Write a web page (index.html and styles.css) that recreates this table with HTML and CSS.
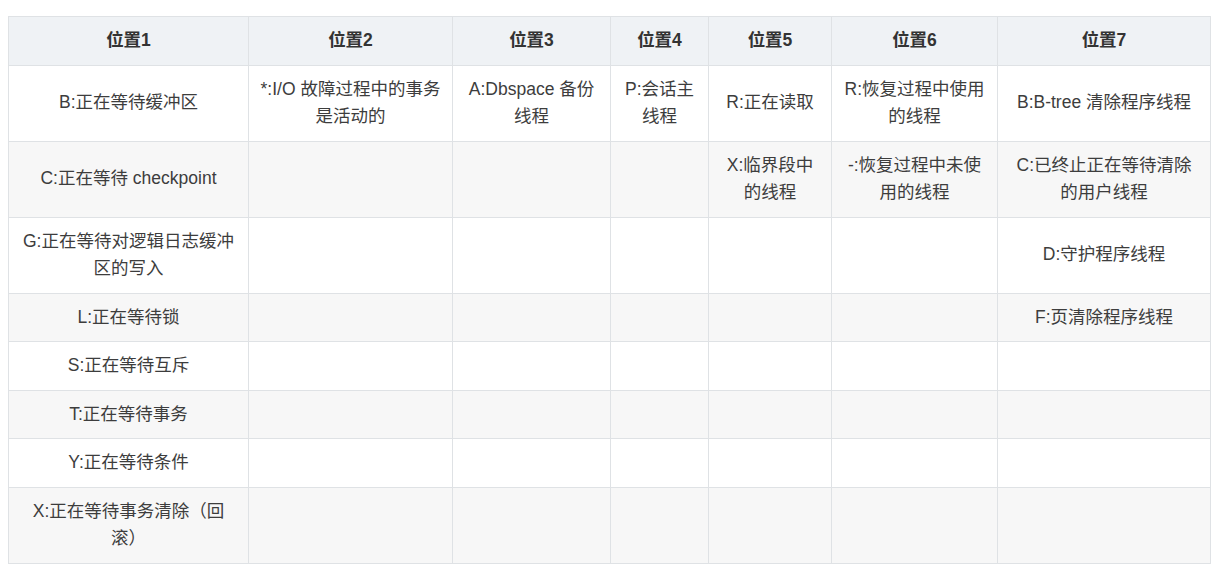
FILE: index.html
```html
<!DOCTYPE html>
<html lang="zh-CN">
<head>
<meta charset="utf-8">
<link rel="stylesheet" href="styles.css">
</head>
<body>
<table class="grid">
  <colgroup>
    <col class="c1"><col class="c2"><col class="c3"><col class="c4"><col class="c5"><col class="c6"><col class="c7">
  </colgroup>
  <thead>
    <tr><th>位置1</th><th>位置2</th><th>位置3</th><th>位置4</th><th>位置5</th><th>位置6</th><th>位置7</th></tr>
  </thead>
  <tbody>
    <tr><td>B:正在等待缓冲区</td><td>*:I/O 故障过程中的事务是活动的</td><td>A:Dbspace 备份线程</td><td>P:会话主线程</td><td>R:正在读取</td><td>R:恢复过程中使用的线程</td><td>B:B-tree 清除程序线程</td></tr>
    <tr><td>C:正在等待 checkpoint</td><td></td><td></td><td></td><td>X:临界段中的线程</td><td>-:恢复过程中未使用的线程</td><td>C:已终止正在等待清除的用户线程</td></tr>
    <tr><td>G:正在等待对逻辑日志缓冲区的写入</td><td></td><td></td><td></td><td></td><td></td><td>D:守护程序线程</td></tr>
    <tr><td>L:正在等待锁</td><td></td><td></td><td></td><td></td><td></td><td>F:页清除程序线程</td></tr>
    <tr><td>S:正在等待互斥</td><td></td><td></td><td></td><td></td><td></td><td></td></tr>
    <tr><td>T:正在等待事务</td><td></td><td></td><td></td><td></td><td></td><td></td></tr>
    <tr><td>Y:正在等待条件</td><td></td><td></td><td></td><td></td><td></td><td></td></tr>
    <tr><td>X:正在等待事务清除（回滚）</td><td></td><td></td><td></td><td></td><td></td><td></td></tr>
  </tbody>
</table>
</body>
</html>
```
FILE: styles.css
```css
html, body {
  margin: 0;
  padding: 0;
  background: #fff;
}
body {
  padding: 16px 8px 8px 8px;
  font-family: "Liberation Sans", "Noto Sans CJK SC", sans-serif;
  font-size: 17.5px;
  color: #3d3d3d;
  text-spacing-trim: space-all;
}
.grid {
  width: 1202px;
  border-collapse: collapse;
  table-layout: fixed;
}
.c1 { width: 240px; }
.c2 { width: 204px; }
.c3 { width: 158px; }
.c4 { width: 98px; }
.c5 { width: 123px; }
.c6 { width: 166px; }
.c7 { width: 213px; }
.grid th, .grid td {
  border: 1px solid #dfe2e5;
  padding: 10px 10.5px;
  line-height: 27.5px;
  text-align: center;
  vertical-align: middle;
}
.grid td:empty {
  height: 27.5px;
}
.grid th {
  background: #eff2f5;
  font-weight: bold;
  color: #333;
}
.grid tbody tr:nth-child(even) td {
  background: #f7f7f7;
}
```
